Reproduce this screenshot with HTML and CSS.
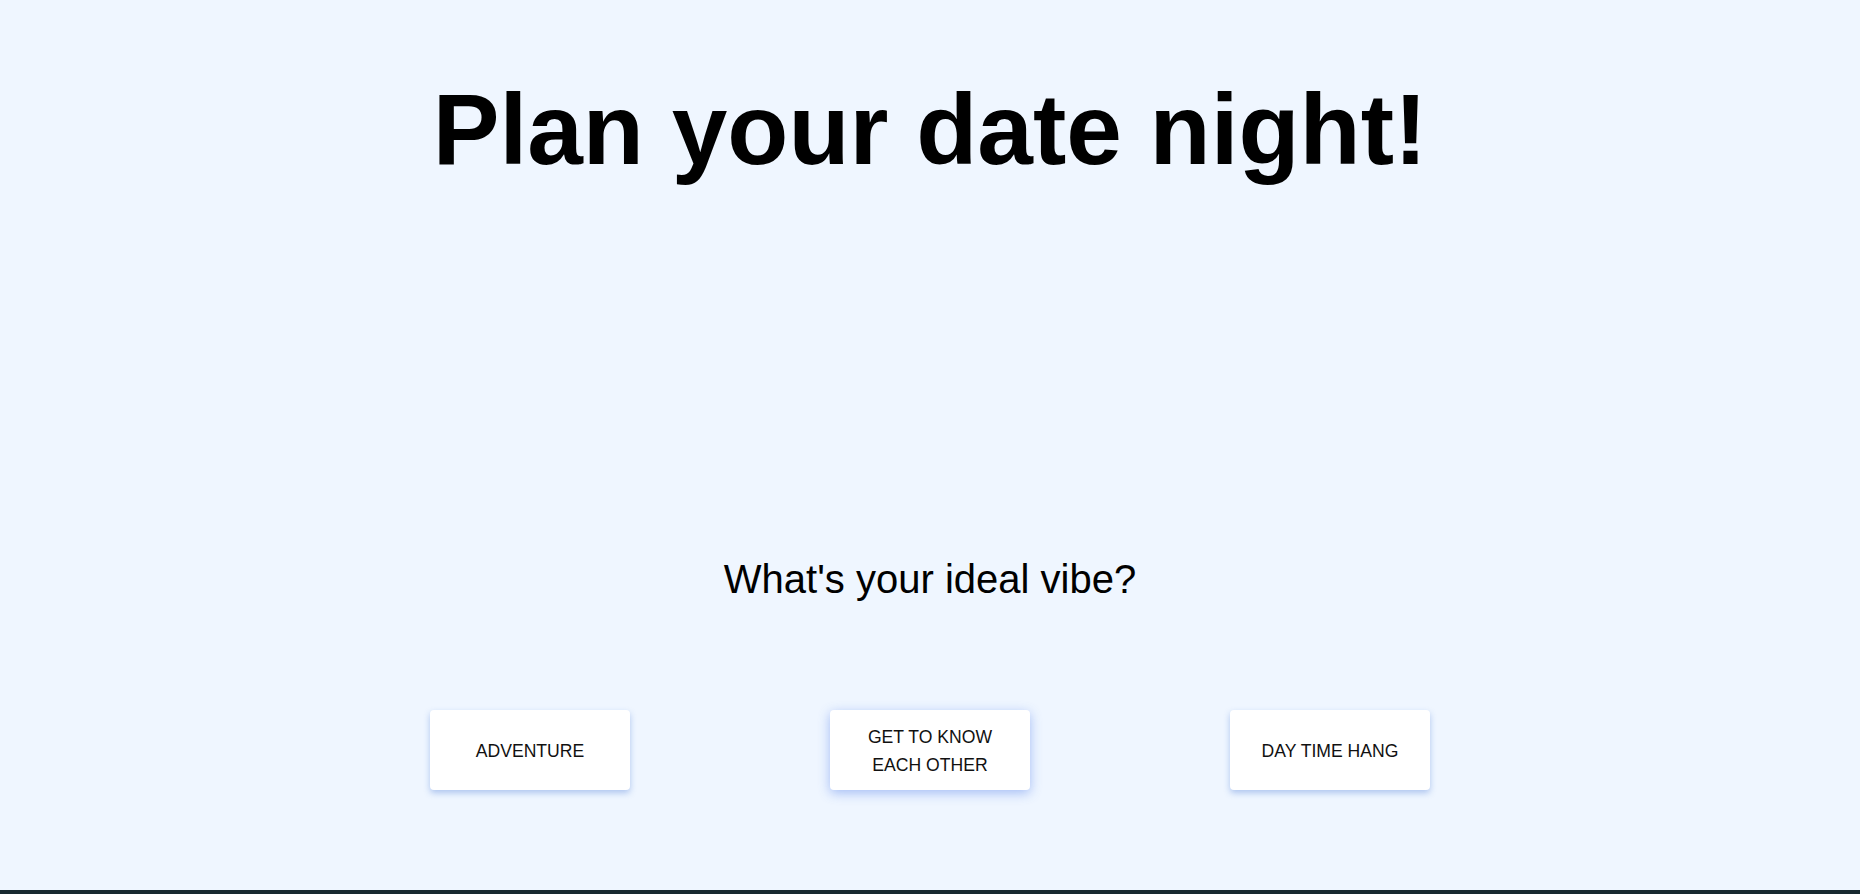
FILE: index.html
```html
<!DOCTYPE html>
<html lang="en">
<head>
<meta charset="utf-8">
<title>Plan your date night!</title>
<link rel="stylesheet" href="styles.css">
</head>
<body>
  <main class="page">
    <h1 class="title">Plan your date night!</h1>
    <h2 class="question">What's your ideal vibe?</h2>
    <div class="choices">
      <button class="choice">Adventure</button>
      <button class="choice choice-hover">Get to know each other</button>
      <button class="choice">Day time hang</button>
    </div>
  </main>
  <footer class="bottom-bar"></footer>
</body>
</html>
```
FILE: styles.css
```css
html, body {
  margin: 0;
  padding: 0;
}

body {
  height: 100vh;
  display: flex;
  flex-direction: column;
  background: #eff6ff;
  font-family: "Liberation Sans", Arial, sans-serif;
  color: #000;
  overflow: hidden;
}

.page {
  flex: 1;
  display: flex;
  flex-direction: column;
  align-items: center;
}

.title {
  margin: 72px 0 0;
  font-size: 100px;
  font-weight: 700;
  line-height: normal;
}

.question {
  margin: 370px 0 0;
  font-size: 40px;
  font-weight: 400;
  line-height: normal;
}

.choices {
  margin-top: 108px;
  display: flex;
  justify-content: center;
  gap: 200px;
}

.choice {
  width: 200px;
  height: 80px;
  padding: 4px 24px 0;
  border: none;
  border-radius: 4px;
  background: #ffffff;
  color: #111;
  font-family: "Liberation Sans", Arial, sans-serif;
  font-size: 17.6px;
  line-height: 1.57;
  text-transform: uppercase;
  box-shadow: 0 3px 6px rgba(59, 110, 210, 0.36);
  cursor: pointer;
}

.choice-hover {
  box-shadow: 0 3px 12px rgba(59, 110, 230, 0.42);
}

.bottom-bar {
  height: 4px;
  background: #18292f;
}
```
